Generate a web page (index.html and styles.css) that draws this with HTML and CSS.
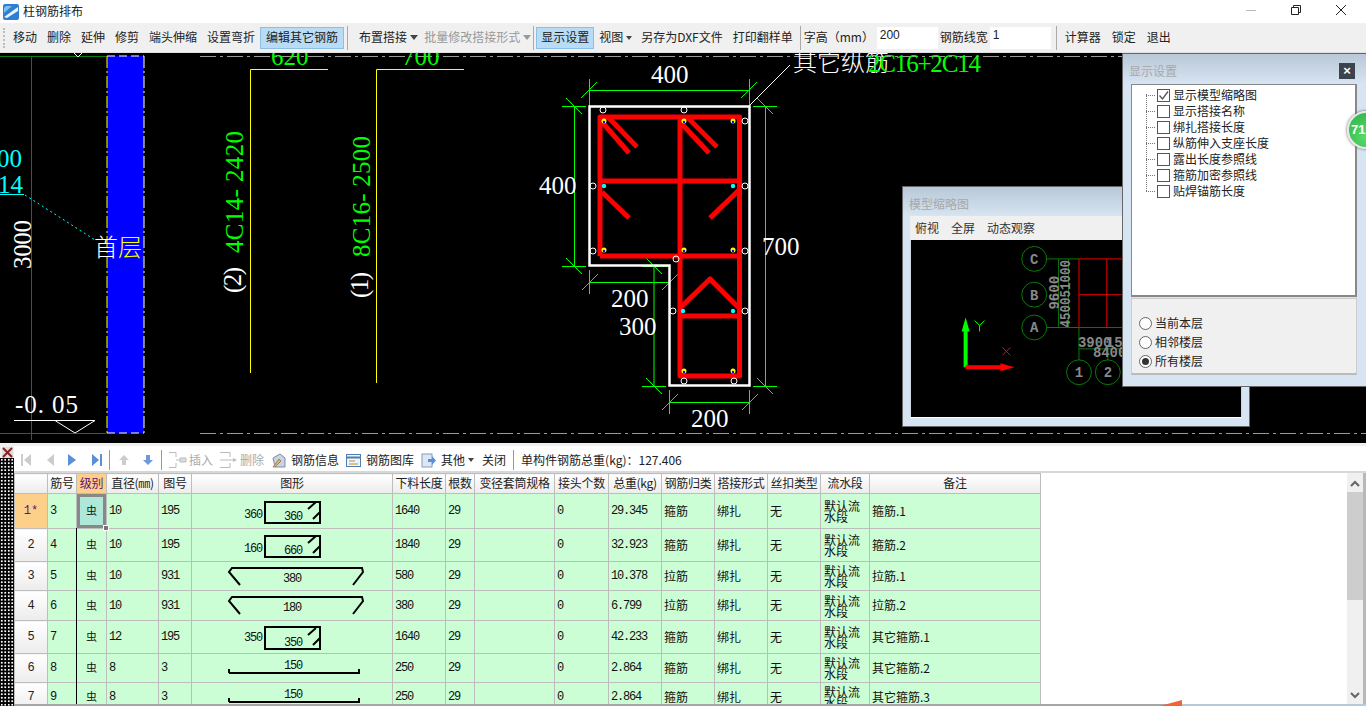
FILE: index.html
```html
<!DOCTYPE html>
<html lang="zh">
<head>
<meta charset="utf-8">
<title>柱钢筋排布</title>
<link rel="stylesheet" href="styles.css">
</head>
<body>
<div class="app">
  <header class="titlebar">
    <svg class="app-icon" width="16" height="16" viewBox="0 0 16 16"><rect width="16" height="16" rx="2" fill="#2f7fd0"/><path d="M1 13 L15 3 L15 7 L4 14 Z" fill="#e8f4ff"/><path d="M1 9 L9 2 L3 2 L1 4Z" fill="#7ec0f0"/></svg>
    <span class="title-text">柱钢筋排布</span>
    <span class="win-btns">
      <svg width="10" height="10" viewBox="0 0 10 10"><path d="M0 5.500H10" stroke="#bbb" fill="none"/></svg>
      <svg width="10" height="10" viewBox="0 0 10 10"><path d="M.5 2.500h7v7h-7z M2.500 2.500v-2h7v7h-2" fill="none" stroke="#222"/></svg>
      <svg width="10" height="10" viewBox="0 0 10 10"><path d="M0 0L10 10M10 0L0 10" stroke="#222" fill="none"/></svg>
    </span>
  </header>

  <nav class="toolbar">
    <span class="grip"></span>
    <button class="tb">移动</button><button class="tb">删除</button><button class="tb">延伸</button><button class="tb">修剪</button><button class="tb">端头伸缩</button><button class="tb">设置弯折</button><button class="tb on">编辑其它钢筋</button>
    <span class="sep"></span>
    <span class="grip grip2"></span>
    <button class="tb tb-c">布置搭接<i class="caret"></i></button><button class="tb tb-c dim">批量修改搭接形式<i class="caret"></i></button>
    <span class="sep sep-b"></span>
    <button class="tb on tb-show">显示设置</button><button class="tb tb-view">视图<i class="caret"></i></button><button class="tb">另存为DXF文件</button><button class="tb tb-print">打印翻样单</button>
    <span class="sep"></span>
    <span class="lbl lbl-h">字高（mm）</span><span class="inp">200</span><span class="lbl">钢筋线宽</span><span class="inp">1</span>
    <span class="sep sep-c"></span>
    <button class="tb">计算器</button><button class="tb tb-m">锁定</button><button class="tb tb-m">退出</button>
  </nav>

  <main class="canvas">
    <svg class="cad" width="1366" height="390" viewBox="0 53 1366 390">
      <rect x="0" y="53" width="1366" height="390" fill="#000"/>
      <!-- floor column -->
      <rect x="107" y="56" width="37" height="377" fill="#0000ff"/>
      <path d="M107 56V433" stroke="#ff0" stroke-dasharray="12 3 2 3"/>
      <path d="M144 56V433" stroke="#fff" stroke-dasharray="12 3 2 3"/>
      <path d="M107 56H144M107 433H144" stroke="#fff" stroke-dasharray="8 4"/>
      <path d="M31.500 56V440M0 56.500H106M0 433.500H106" stroke="#0a7a0a" fill="none"/>
      <path d="M200 56.500H1122M200 433.500H1366" stroke="#999" stroke-dasharray="16 4 3 4"/>
      <path d="M74 53l4 4 4-4" stroke="#fff" fill="none"/>
      <text class="cad-t" x="-3" y="167" fill="#0ff">00</text>
      <text class="cad-t" x="-2" y="193" fill="#0ff">14</text>
      <path d="M0 194.500H24" stroke="#0ff"/>
      <path d="M25 195L95 240" stroke="#0ff" stroke-dasharray="2 3"/>
      <text class="cad-t" x="31" y="269" fill="#fff" textLength="49" transform="rotate(-90 31 269)">3000</text>
      <text class="cad-c" x="94" y="256" fill="#fff">首</text>
      <text class="cad-c" x="118" y="256" fill="#ff0">层</text>
      <text class="cad-t" x="15" y="413" fill="#fff" textLength="63">-0. 05</text>
      <path d="M14 420.500H95L75 433 55 420.500" stroke="#fff" fill="none"/>

      <!-- rebar schedule -->
      <path d="M250.500 373V69.500H328M376.500 383V69.500H464" stroke="#ff0" fill="none"/>
      <text class="cad-t" x="271" y="65" fill="#0f0">620</text>
      <text class="cad-t" x="402" y="65" fill="#0f0">700</text>
      <text class="cad-t" x="243" y="253" fill="#0f0" textLength="122" transform="rotate(-90 243 253)">4C14- 2420</text>
      <text class="cad-t" x="241" y="293" fill="#fff" textLength="26" transform="rotate(-90 241 293)">(2)</text>
      <text class="cad-t" x="370" y="257" fill="#0f0" textLength="121" transform="rotate(-90 370 257)">8C16- 2500</text>
      <text class="cad-t" x="368" y="298" fill="#fff" textLength="26" transform="rotate(-90 368 298)">(1)</text>

      <!-- section: dimensions -->
      <g stroke="#0f0" fill="none">
        <path d="M589 90.500H749M589.500 79V106M749.500 79V106M581 98l16-16M741 98l16-16"/>
        <path d="M574.500 106V266M562 106.500H586M562 266.500H586M566 98l16 16M566 258l16 16"/>
        <path d="M765.500 106V386M753 106.500H777M753 386.500H777M757 98l16 16M757 378l16 16"/>
        <path d="M589 282.500H669M589.500 270V294M669.500 266V294M582 290l16-16M662 290l16-16"/>
        <path d="M654 266V386M642 266.500H669M642 386.500H666M646 258l16 16M646 378l16 16"/>
        <path d="M669 402.500H749M669.500 390V414M749.500 390V414M662 410l16-16M742 410l16-16"/>
      </g>
      <text class="cad-t" x="651" y="83" fill="#fff">400</text>
      <text class="cad-t" x="539" y="194" fill="#fff">400</text>
      <text class="cad-t" x="762" y="255" fill="#fff">700</text>
      <text class="cad-t" x="611" y="307" fill="#fff">200</text>
      <text class="cad-t" x="619" y="335" fill="#fff">300</text>
      <text class="cad-t" x="691" y="427" fill="#fff">200</text>
      <path d="M749 106L790 65" stroke="#fff"/>
      <text class="cad-c" x="793" y="71" fill="#fff">其它纵筋</text>
      <text class="cad-t" x="868" y="72" fill="#0f0" textLength="113">2C16+2C14</text>

      <!-- section: outline and bars -->
      <path d="M589.500 106.500H749.500V385.500H669.500V265.500H589.500Z" fill="none" stroke="#fff" stroke-width="2.500"/>
      <g stroke="#f00" stroke-width="5" fill="none" stroke-linejoin="round">
        <path d="M600 256V117H739.500V376H680V117M600 256H739.500M600 181H739.500M680 316H739.500"/>
        <path d="M602 122L629 153M608 117L637 147M680 122L709 153M687 117L717 147M602 192L629 218M739 190L710 218M680 308L710 279L739 308"/>
      </g>
      <g fill="none" stroke="#fff">
        <circle cx="603" cy="110" r="3"/><circle cx="684" cy="110" r="3"/><circle cx="745" cy="121" r="3"/>
        <circle cx="593" cy="186" r="3"/><circle cx="745" cy="186" r="3"/><circle cx="593" cy="251" r="3"/>
        <circle cx="745" cy="251" r="3"/><circle cx="676" cy="259" r="3"/><circle cx="673" cy="311" r="3"/>
        <circle cx="745" cy="311" r="3"/><circle cx="684" cy="381" r="3"/><circle cx="734" cy="381" r="3"/>
      </g>
      <g fill="#ff0">
        <circle cx="604" cy="121" r="2.500"/><circle cx="684" cy="121" r="2.500"/><circle cx="733" cy="121" r="2.500"/>
        <circle cx="604" cy="250" r="2.500"/><circle cx="684" cy="250" r="2.500"/><circle cx="733" cy="250" r="2.500"/>
        <circle cx="684" cy="371" r="2.500"/><circle cx="733" cy="371" r="2.500"/>
      </g>
      <g fill="#00f">
        <circle cx="604" cy="122" r="1.200"/><circle cx="684" cy="122" r="1.200"/><circle cx="733" cy="122" r="1.200"/>
        <circle cx="604" cy="251" r="1.200"/><circle cx="684" cy="251" r="1.200"/><circle cx="733" cy="251" r="1.200"/>
        <circle cx="684" cy="372" r="1.200"/><circle cx="733" cy="372" r="1.200"/>
      </g>
      <g fill="#0ff">
        <circle cx="604" cy="186" r="2.200"/><circle cx="733" cy="186" r="2.200"/><circle cx="683" cy="311" r="2.200"/><circle cx="733" cy="311" r="2.200"/>
      </g>
    </svg>

    <section class="win win-thumb">
      <div class="win-title">模型缩略图</div>
      <div class="thumb-menu"><span>俯视</span><span>全屏</span><span>动态观察</span></div>
      <svg class="thumb-view" width="332" height="178" viewBox="0 0 332 178">
        <rect width="332" height="178" fill="#000"/>
        <path d="M169 19H340M169 55H340M169 88H340M169 19V88M197 19V88" stroke="#e00" fill="none"/>
        <path d="M136 19H169M136 88H169M148.500 19V88M158.500 19V88M169 88V121M198 109V121M169 109.500H240" stroke="#0a7a0a" fill="none"/>
        <g fill="none" stroke="#0a7a0a">
          <circle cx="124" cy="19" r="12.500"/><circle cx="124" cy="55" r="12.500"/><circle cx="124" cy="88" r="12.500"/>
          <circle cx="169" cy="133" r="12.500"/><circle cx="198" cy="133" r="12.500"/>
        </g>
        <g class="th-t">
          <text x="124" y="24" text-anchor="middle">C</text>
          <text x="124" y="60" text-anchor="middle">B</text>
          <text x="124" y="93" text-anchor="middle">A</text>
          <text x="169" y="138" text-anchor="middle">1</text>
          <text x="198" y="138" text-anchor="middle">2</text>
          <text x="168" y="108">3900</text>
          <text x="183" y="118">8400</text>
          <text x="196" y="108">15</text>
          <text x="160" y="88" textLength="68" lengthAdjust="spacingAndGlyphs" transform="rotate(-90 160 88)">450051000</text>
          <text x="149" y="70" textLength="34" lengthAdjust="spacingAndGlyphs" transform="rotate(-90 149 70)">9600</text>
        </g>
        <path d="M55 128V88" stroke="#0f0" stroke-width="4"/>
        <path d="M55 78l-4 14h8z" fill="#0f0"/>
        <path d="M64 81l5 5 5-5M69 86v6" stroke="#0f0" fill="none"/>
        <path d="M55 128H95" stroke="#f00" stroke-width="4"/>
        <path d="M104 128l-14-4v8z" fill="#f00"/>
        <path d="M92 108l8 8M100 108l-8 8" stroke="#f00" fill="none"/>
      </svg>
    </section>

    <section class="win win-show">
      <div class="win-title">显示设置<span class="win-x">×</span></div>
      <div class="tree">
        <div class="tree-row"><i class="chk chk-on"><svg width="11" height="11" viewBox="0 0 11 11"><path d="M1.500 5.500L4.500 9 10 1.500" fill="none" stroke="#555" stroke-width="1.300"/></svg></i>显示模型缩略图</div>
        <div class="tree-row"><i class="chk"></i>显示搭接名称</div>
        <div class="tree-row"><i class="chk"></i>绑扎搭接长度</div>
        <div class="tree-row"><i class="chk"></i>纵筋伸入支座长度</div>
        <div class="tree-row"><i class="chk"></i>露出长度参照线</div>
        <div class="tree-row"><i class="chk"></i>箍筋加密参照线</div>
        <div class="tree-row"><i class="chk"></i>贴焊锚筋长度</div>
      </div>
      <div class="radios">
        <div class="radio-row"><i class="radio"></i>当前本层</div>
        <div class="radio-row"><i class="radio"></i>相邻楼层</div>
        <div class="radio-row"><i class="radio radio-on"></i>所有楼层</div>
      </div>
    </section>
    <div class="ball">71</div>
  </main>

  <section class="bottom">
    <aside class="strip"><span class="strip-x"><svg width="11" height="11" viewBox="0 0 11 11"><rect width="11" height="11" fill="#ddd"/><path d="M1 1L10 10M10 1L1 10" stroke="#822" stroke-width="2"/></svg></span><span class="dots"></span></aside>
    <div class="grid-wrap">
      <div class="grid-bar">
        <svg class="gi gi-a" width="10" height="14" viewBox="0 0 10 14"><path d="M0 1h2v12H0zM10 1v12L3 7z" fill="#ccc"/></svg>
        <svg class="gi gi-p" width="7" height="14" viewBox="0 0 7 14"><path d="M7 1v12L0 7z" fill="#ccc"/></svg>
        <svg class="gi gi-n" width="8" height="14" viewBox="0 0 8 14"><path d="M0 1v12l8-6z" fill="#5b8fd6"/></svg>
        <svg class="gi gi-p" width="10" height="14" viewBox="0 0 10 14"><path d="M8 1h2v12H8zM0 1v12l7-6z" fill="#5b8fd6"/></svg>
        <span class="bar-sep"></span>
        <svg class="gi gi-u" width="12" height="12" viewBox="0 0 12 12"><path d="M6 1l5 5H8v5H4V6H1z" fill="#ccc"/></svg>
        <svg class="gi gi-c" width="12" height="12" viewBox="0 0 12 12"><path d="M6 11L1 6h3V1h4v5h3z" fill="#6e9ad8"/></svg>
        <span class="bar-sep"></span>
        <svg class="gi" width="18" height="16" viewBox="0 0 18 16"><path d="M0 .500H7V5M0 15.500H7V11M7 8H12" stroke="#bbb" fill="none"/><path d="M11 6h6v4h-6z" fill="#ddd" stroke="#bbb"/></svg>
        <span class="bt bt-s dim">插入</span>
        <svg class="gi gi-d" width="18" height="16" viewBox="0 0 18 16"><path d="M0 .500H10V5M0 15.500H10V11M0 8H14" stroke="#bbb" fill="none"/><path d="M13 6l4 2-4 2z" fill="#bbb"/></svg>
        <span class="bt bt-s dim">删除</span>
        <svg class="gi gi-d" width="15" height="15" viewBox="0 0 15 15"><path d="M2 5L9 1l5 4v9H4z" fill="#c8d4e0" stroke="#7d8ea0"/><path d="M2 14L8 6l2 2-6 6z" fill="#e8b050" stroke="#987"/></svg>
        <span class="bt">钢筋信息</span>
        <svg class="gi gi-d" width="15" height="13" viewBox="0 0 15 13"><rect x=".500" y=".500" width="14" height="12" fill="#eef4fb" stroke="#4f7fae"/><path d="M1 3.500H14" stroke="#4f7fae" stroke-width="2"/><path d="M3 7h6M3 10h9" stroke="#d08a30"/></svg>
        <span class="bt">钢筋图库</span>
        <svg class="gi gi-d" width="15" height="15" viewBox="0 0 15 15"><rect x="1" y="1" width="10" height="13" fill="#dde6f2" stroke="#7f9cc0"/><path d="M7 6h4V3l4 4.500-4 4.500V9H7z" fill="#5b8fd6"/></svg>
        <span class="bt">其他</span><i class="caret caret-s"></i>
        <span class="bt bt-close">关闭</span>
        <span class="bar-sep"></span>
        <span class="bt bt-sum">单构件钢筋总重(kg)：127.406</span>
      </div>
      <div class="grid-body">
        <div class="sheet">
          <table class="tbl">
            <colgroup>
              <col class="c-n"><col class="c-a"><col class="c-b"><col class="c-c"><col class="c-d"><col class="c-e"><col class="c-f"><col class="c-g"><col class="c-h"><col class="c-i"><col class="c-j"><col class="c-k"><col class="c-l"><col class="c-m"><col class="c-o"><col class="c-p">
            </colgroup>
            <thead>
              <tr class="hd"><th></th><th>筋号</th><th class="hot">级别</th><th>直径(㎜)</th><th>图号</th><th>图形</th><th>下料长度</th><th>根数</th><th>变径套筒规格</th><th>接头个数</th><th>总重(kg)</th><th>钢筋归类</th><th>搭接形式</th><th>丝扣类型</th><th>流水段</th><th>备注</th></tr>
            </thead>
            <tbody>
              <tr class="r35"><th class="hot">1*</th><td class="num">3</td><td class="gr sel">虫</td><td class="num">10</td><td class="num">195</td>
                <td class="shape"><svg width="200" height="34" viewBox="0 0 200 34"><text x="52" y="24" class="st">360</text><path d="M73 8H128V29H73Z M116 15l8-7M121 25l7-7" fill="none" stroke="#000" stroke-width="2"/><text x="92" y="26" class="st">360</text></svg></td>
                <td class="num">1640</td><td class="num">29</td><td></td><td class="num">0</td><td class="num">29.345</td><td>箍筋</td><td>绑扎</td><td>无</td><td class="flow">默认流水段</td><td>箍筋.1</td></tr>
              <tr class="r33"><th>2</th><td class="num">4</td><td class="gr">虫</td><td class="num">10</td><td class="num">195</td>
                <td class="shape"><svg width="200" height="32" viewBox="0 0 200 32"><text x="52" y="23" class="st">160</text><path d="M73 7H128V28H73Z M116 14l8-7M121 24l7-7" fill="none" stroke="#000" stroke-width="2"/><text x="92" y="25" class="st">660</text></svg></td>
                <td class="num">1840</td><td class="num">29</td><td></td><td class="num">0</td><td class="num">32.923</td><td>箍筋</td><td>绑扎</td><td>无</td><td class="flow">默认流水段</td><td>箍筋.2</td></tr>
              <tr class="r29"><th>3</th><td class="num">5</td><td class="gr">虫</td><td class="num">10</td><td class="num">931</td>
                <td class="shape"><svg width="200" height="28" viewBox="0 0 200 28"><path d="M48 23L37 10 40 6H170L171 10 161 23" fill="none" stroke="#000" stroke-width="2"/><text x="91" y="20" class="st">380</text></svg></td>
                <td class="num">580</td><td class="num">29</td><td></td><td class="num">0</td><td class="num">10.378</td><td>拉筋</td><td>绑扎</td><td>无</td><td class="flow">默认流水段</td><td>拉筋.1</td></tr>
              <tr class="r30"><th>4</th><td class="num">6</td><td class="gr">虫</td><td class="num">10</td><td class="num">931</td>
                <td class="shape"><svg width="200" height="29" viewBox="0 0 200 29"><path d="M48 23L37 10 40 6H170L171 10 161 23" fill="none" stroke="#000" stroke-width="2"/><text x="91" y="20" class="st">180</text></svg></td>
                <td class="num">380</td><td class="num">29</td><td></td><td class="num">0</td><td class="num">6.799</td><td>拉筋</td><td>绑扎</td><td>无</td><td class="flow">默认流水段</td><td>拉筋.2</td></tr>
              <tr class="r33"><th>5</th><td class="num">7</td><td class="gr">虫</td><td class="num">12</td><td class="num">195</td>
                <td class="shape"><svg width="200" height="32" viewBox="0 0 200 32"><text x="52" y="20" class="st">350</text><path d="M73 6H128V28H73Z M116 14l8-7M121 24l7-7" fill="none" stroke="#000" stroke-width="2"/><text x="92" y="25" class="st">350</text></svg></td>
                <td class="num">1640</td><td class="num">29</td><td></td><td class="num">0</td><td class="num">42.233</td><td>箍筋</td><td>绑扎</td><td>无</td><td class="flow">默认流水段</td><td>其它箍筋.1</td></tr>
              <tr class="r29"><th>6</th><td class="num">8</td><td class="gr">虫</td><td class="num">8</td><td class="num">3</td>
                <td class="shape"><svg width="200" height="28" viewBox="0 0 200 28"><path d="M37 19V15M37 19H167V15" fill="none" stroke="#000" stroke-width="2"/><text x="92" y="15" class="st">150</text></svg></td>
                <td class="num">250</td><td class="num">29</td><td></td><td class="num">0</td><td class="num">2.864</td><td>箍筋</td><td>绑扎</td><td>无</td><td class="flow">默认流水段</td><td>其它箍筋.2</td></tr>
              <tr class="r29"><th>7</th><td class="num">9</td><td class="gr">虫</td><td class="num">8</td><td class="num">3</td>
                <td class="shape"><svg width="200" height="28" viewBox="0 0 200 28"><path d="M37 19V15M37 19H167V15" fill="none" stroke="#000" stroke-width="2"/><text x="92" y="15" class="st">150</text></svg></td>
                <td class="num">250</td><td class="num">29</td><td></td><td class="num">0</td><td class="num">2.864</td><td>箍筋</td><td>绑扎</td><td>无</td><td class="flow">默认流水段</td><td>其它箍筋.3</td></tr>
            </tbody>
          </table>
          <span class="sel-handle"></span>
          <span class="v-line"></span>
        </div>
        <div class="vscroll">
          <svg width="16" height="19" viewBox="0 0 16 19"><path d="M4 13l4-4 4 4" fill="none" stroke="#666" stroke-width="2"/></svg>
          <span class="vthumb"></span>
          <span class="vrest"></span>
          <svg width="16" height="14" viewBox="0 0 16 14"><path d="M4 5l4 4 4-4" fill="none" stroke="#666" stroke-width="2"/></svg>
        </div>
      </div>
      <div class="bottom-line"><span class="wedge"></span></div>
    </div>
  </section>
</div>
</body>
</html>
```
FILE: styles.css
```css
* { box-sizing: border-box; }
html, body { margin: 0; padding: 0; height: 100%; overflow: hidden; background: #fff; }
body { font: 12px/1.2 "Noto Sans CJK SC", "Liberation Sans", sans-serif; color: #222; }
.app { width: 1366px; height: 706px; display: flex; flex-direction: column; position: relative; overflow: hidden; }

.titlebar { height: 23px; display: flex; align-items: center; background: #fff; padding-left: 3px; flex: none; }
.title-text { margin-left: 4px; font-size: 12px; }
.win-btns { margin-left: auto; display: flex; align-items: center; padding-right: 20px; gap: 35px; margin-top: -3px; }
.win-btns svg { display: block; }
.app-icon { flex: none; }

.toolbar { height: 30px; flex: none; display: flex; align-items: center; background: #f0f0f0; padding: 1px 0 1px 3px; border-bottom: 1px solid #e0e0e0; }
.grip { width: 2px; height: 20px; margin-right: 3px; flex: none; border-left: 2px dotted #bdbdbd; }
.grip2 { width: 0; margin: 0 0 0 3px; border: 0; }
.tb { font: inherit; color: #222; background: none; border: 1px solid transparent; height: 22px; padding: 0 4px; display: inline-flex; align-items: center; white-space: nowrap; flex: none; }
.tb.on { background: #b9dcf6; border-color: #8dbfe6; padding: 0 5px; }
.tb.tb-show { padding: 0 4px; }
.tb.dim { color: #999; }
.tb-c { padding-right: 0; }
.tb-view { padding-right: 3px; }
.tb-print { padding-right: 3px; }
.tb-m { margin-left: 1px; }
.caret { display: inline-block; width: 0; height: 0; border: 4px solid transparent; border-top: 5px solid #444; border-bottom: 0; margin-left: 3px; }
.tb.dim .caret { border-top-color: #999; }
.tb-view .caret { border-width: 3px; border-top-width: 4px; border-bottom-width: 0; }
.sep { width: 1px; height: 24px; background: #aaa; margin: 0 3px; flex: none; }
.sep-b { margin: 0 2px 0 1px; }
.sep-c { margin: 0 3px; }
.lbl { white-space: nowrap; flex: none; }
.lbl-h { width: 71px; }
.inp { width: 61px; height: 22px; background: #fff; padding: 1px 3px; margin: 0 2px; flex: none; font-family: "Liberation Sans", sans-serif; }

.canvas { height: 390px; flex: none; position: relative; background: #000; overflow: hidden; }
.cad { display: block; }
.cad-t { font: 25px "Liberation Serif", serif; }
.cad-c { font: 300 24px "Noto Sans CJK SC", sans-serif; }

.win { position: absolute; background: #d7e4f1; border: 1px solid #666; }
.win-title { height: 30px; background: linear-gradient(#b8c8d8, #d7e4f1); color: #a8a8a8; padding: 10px 0 0 6px; font-size: 12px; line-height: 14px; position: relative; }
.win-x { position: absolute; left: 216px; top: 9px; width: 16px; height: 16px; background: #3b444e; color: #fff; font: bold 13px/15px "Liberation Sans", sans-serif; text-align: center; }

.win-thumb { left: 902px; top: 133px; width: 348px; height: 241px; padding: 0 7px 8px 7px; }
.win-thumb .win-title { margin: 0 -7px; height: 29px; padding-left: 6px; }
.thumb-menu { height: 24px; background: #f0f0f0; display: flex; gap: 12px; align-items: center; padding-left: 5px; color: #333; }
.thumb-view { display: block; margin-left: 0; border-bottom: 1px solid #fff; }
.th-t text { font: bold 14px "Liberation Mono", monospace; fill: #888; }

.win-show { left: 1122px; top: 0; width: 260px; height: 334px; padding: 0 0 0 8px; }
.win-show .win-title { margin-left: -8px; }
.tree { width: 226px; height: 213px; background: #fff; border: 1px solid #888; border-right: 2px solid #888; border-bottom: 2px solid #888; padding: 2px 0 0 25px; position: relative; }
.tree::before { content: ""; position: absolute; left: 14px; top: 9px; height: 97px; border-left: 1px dotted #777; }
.tree-row { height: 16px; display: flex; align-items: center; color: #222; position: relative; }
.tree-row::before { content: ""; position: absolute; left: -11px; top: 8px; width: 9px; border-top: 1px dotted #777; }
.chk { width: 13px; height: 13px; border: 1px solid #555; margin-right: 3px; display: inline-flex; align-items: center; justify-content: center; background: #fff; flex: none; }
.radios { width: 226px; height: 77px; margin-top: 1px; background: #f0f0f0; border: 1px solid #ccc; border-bottom: 2px solid #bbb; padding: 15px 0 0 7px; }
.radio-row { height: 19px; display: flex; align-items: center; }
.radio { width: 13px; height: 13px; border: 1px solid #666; border-radius: 50%; background: #fff; margin-right: 3px; flex: none; position: relative; }
.radio-on::after { content: ""; position: absolute; left: 2px; top: 2px; width: 7px; height: 7px; border-radius: 50%; background: #333; }

.ball { position: absolute; left: 1347px; top: 58px; width: 38px; height: 38px; border-radius: 50%; background: radial-gradient(circle at 50% 70%, #55dd66, #2fb04a); border: 2px solid #e8e8e8; box-shadow: 0 0 3px #555; color: #fff; font: bold 13px/34px "Liberation Sans", sans-serif; padding-left: 2px; }

.bottom { flex: 1; display: flex; min-height: 0; background: #f0f0f0; padding-top: 3px; }
.strip { width: 14px; flex: none; display: flex; flex-direction: column; background: #f0f0f0; }
.strip-x { height: 11px; padding-left: 2px; line-height: 0; margin-top: 1px; flex: none; }
.dots { flex: 1; background-color: #000; background-image: radial-gradient(#fff 1px, transparent 1.100px); background-size: 3.500px 3.500px; }
.grid-wrap { flex: 1; display: flex; flex-direction: column; min-width: 0; }
.grid-bar { height: 27px; flex: none; background: #fff; display: flex; align-items: center; padding: 3px 0 0 7px; border-bottom: 2px solid #d8d8d8; }
.gi { flex: none; }
.gi-p { margin-left: 16px; }
.gi-n { margin-left: 14px; }
.gi-u { margin-left: 1px; }
.gi-c { margin-left: 12px; }
.gi-d { margin-left: 7px; }
.bar-sep { width: 1px; height: 20px; background: #999; margin: 0 7px; flex: none; }
.bt { margin-left: 5px; white-space: nowrap; color: #222; flex: none; }
.bt-s { margin-left: 2px; }
.bt.dim { color: #aaa; }
.bt-close { margin-left: 8px; }
.bt-sum { margin-left: 0; }
.caret-s { border-width: 3px; border-top-width: 4px; border-bottom-width: 0; margin-left: 3px; flex: none; }

.grid-body { flex: 1; display: flex; min-height: 0; background: #fff; }
.sheet { flex: 1; position: relative; overflow: hidden; min-width: 0; }
.tbl { border-collapse: collapse; table-layout: fixed; width: 1027px; }
.c-n { width: 33px; } .c-a { width: 29px; } .c-b { width: 30px; } .c-c { width: 52px; } .c-d { width: 33px; }
.c-e { width: 201px; } .c-f { width: 53px; } .c-g { width: 29px; } .c-h { width: 80px; } .c-i { width: 54px; }
.c-j { width: 53px; } .c-k { width: 53px; } .c-l { width: 53px; } .c-m { width: 53px; } .c-o { width: 49px; } .c-p { width: 171px; }
.tbl th, .tbl td { border: 1px solid #bdbdbd; padding: 0; font-weight: 400; overflow: hidden; white-space: nowrap; }
.tbl th { background: linear-gradient(#fff, #ececec); text-align: center; }
.tbl th.hot { background: #fdd089; color: #60107a; }
.hd { height: 20px; }
.hd th { font-size: 12px; letter-spacing: -0.300px; }
.tbl td { background: #ccfed6; padding-left: 2px; color: #111; }
.r35 { height: 35px; } .r33 { height: 33px; } .r29 { height: 29px; } .r30 { height: 30px; }
.tbl tbody th { font: 12px "Liberation Mono", monospace; }
.num { font: 12px "Liberation Mono", monospace; letter-spacing: -1.200px; }
.tbl td.gr { text-align: center; padding: 0; font-size: 11px; }
.tbl td.sel { background: #aee8d8; box-shadow: inset 0 0 0 3px #888; }
.tbl td.shape { padding: 0; line-height: 0; }
.shape svg { display: block; }
.st { font: 12px "Liberation Mono", monospace; letter-spacing: -1.200px; fill: #111; }
.tbl td.flow { white-space: normal; font-size: 12px; line-height: 11px; padding: 0 3px; word-break: break-all; }
.sel-handle { position: absolute; left: 89px; top: 52px; width: 6px; height: 6px; background: #777; border: 1px solid #fff; }
.v-line { position: absolute; left: 62px; top: 55px; bottom: 0; width: 1px; background: #000; }

.vscroll { width: 19px; flex: none; display: flex; flex-direction: column; background: #f0f0f0; border-right: 3px solid #b8b8b8; padding-bottom: 2px; }
.vscroll svg { display: block; flex: none; }
.vthumb { height: 108px; background: #cdcdcd; flex: none; }
.vrest { flex: 1; }
.bottom-line { height: 2px; flex: none; background: linear-gradient(to right, #a6a6a6 1165px, #b8cad8 1165px); position: relative; }
.wedge { position: absolute; left: 1146px; top: -4px; width: 22px; height: 6px; background: #f26432; clip-path: polygon(0 100%, 100% 0, 100% 100%); }
```
